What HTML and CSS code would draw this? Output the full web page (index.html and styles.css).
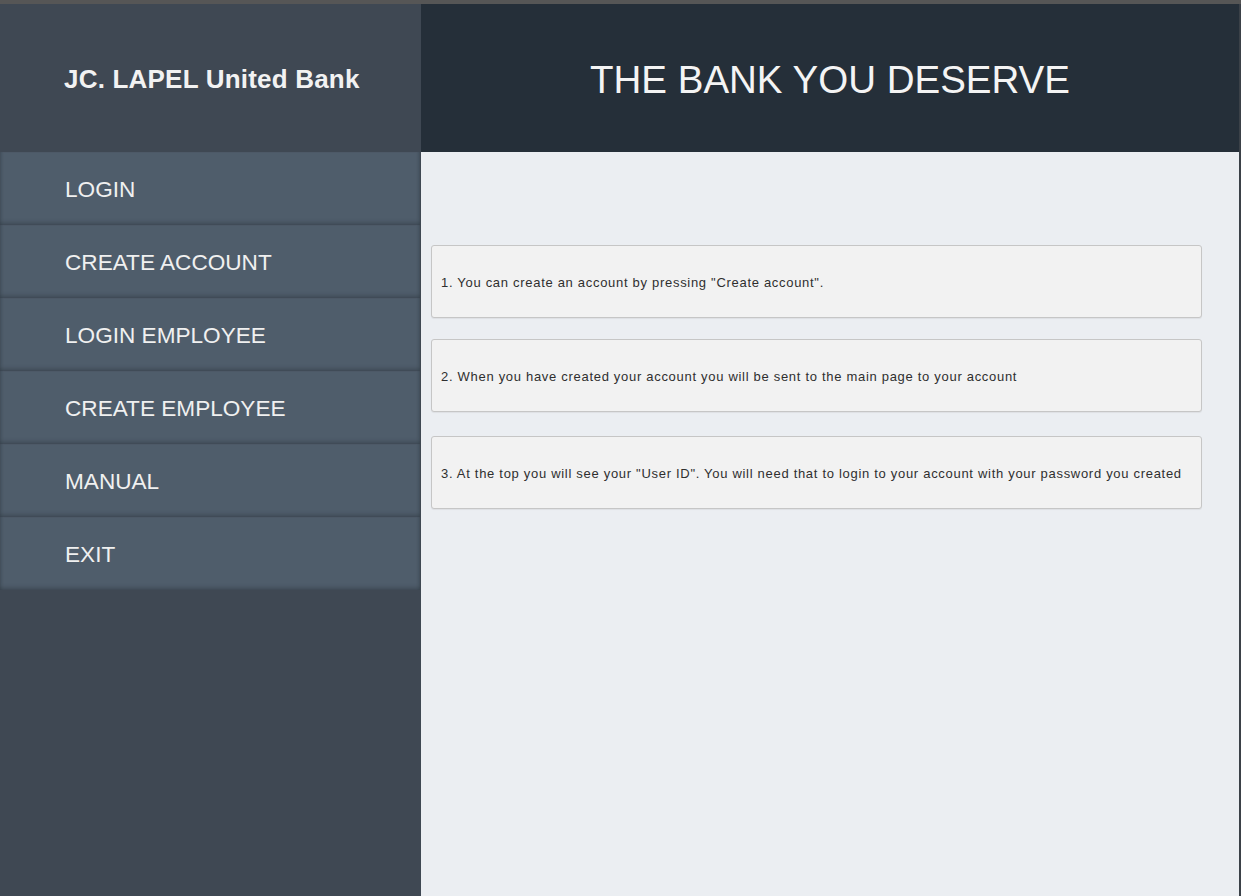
FILE: index.html
```html
<!DOCTYPE html>
<html>
<head>
<meta charset="utf-8">
<link rel="stylesheet" href="styles.css">
</head>
<body>
<div class="window">
  <div class="topbar"></div>
  <div class="app">
    <aside class="sidebar">
      <div class="brand">JC. LAPEL United Bank</div>
      <nav class="menu">
        <div class="item">LOGIN</div>
        <div class="item">CREATE ACCOUNT</div>
        <div class="item">LOGIN EMPLOYEE</div>
        <div class="item">CREATE EMPLOYEE</div>
        <div class="item">MANUAL</div>
        <div class="item">EXIT</div>
      </nav>
    </aside>
    <main class="main">
      <header class="hero">THE BANK YOU DESERVE</header>
      <section class="content">
        <div class="note n1">1. You can create an account by pressing "Create account".</div>
        <div class="note n2">2. When you have created your account you will be sent to the main page to your account</div>
        <div class="note n3">3. At the top you will see your "User ID". You will need that to login to your account with your password you created</div>
      </section>
    </main>
  </div>
</div>
</body>
</html>
```
FILE: styles.css
```css
* { box-sizing: border-box; }
html, body { margin: 0; padding: 0; }
body {
  width: 1241px;
  height: 896px;
  overflow: hidden;
  font-family: "Liberation Sans", Arial, sans-serif;
  background: #3f4853;
}
.window { display: flex; flex-direction: column; height: 896px; }
.topbar { height: 4px; background: #565656; flex: none; }
.app { display: flex; flex: 1; min-height: 0; }
.sidebar {
  width: 421px;
  flex: none;
  background: #3f4853;
  display: flex;
  flex-direction: column;
}
.brand {
  height: 148px;
  display: flex;
  align-items: center;
  padding-left: 64px;
  padding-top: 2px;
  color: #f2f2f2;
  font-size: 26px;
  font-weight: bold;
  letter-spacing: 0.2px;
}
.menu { display: flex; flex-direction: column; width: 420px; }
.item {
  height: 73px;
  display: flex;
  align-items: center;
  padding-left: 65px;
  padding-top: 3px;
  background: #4f5d6b;
  color: #f0f0f0;
  font-size: 22.6px;
  box-shadow: inset 0 -4px 4px -2px rgba(40, 48, 58, 0.45), inset 3px 0 3px -2px rgba(40,48,58,0.35), inset -3px 0 3px -2px rgba(40,48,58,0.35);
}
.main {
  flex: 1;
  display: flex;
  flex-direction: column;
  border-right: 2px solid #3b4148;
}
.hero {
  height: 148px;
  flex: none;
  background: #252f39;
  color: #f4f4f4;
  font-size: 38.5px;
  display: flex;
  align-items: center;
  justify-content: center;
  padding-top: 3px;
}
.content {
  flex: 1;
  background: #ebeef2;
  padding: 93px 37px 0 10px;
  display: flex;
  flex-direction: column;
}
.note {
  height: 73px;
  width: 771px;
  background: #f2f2f2;
  border: 1px solid #c6c6c6;
  border-radius: 3px;
  box-shadow: 0 1px 1px rgba(0,0,0,0.06);
  display: flex;
  align-items: center;
  padding-left: 9px;
  padding-top: 1px;
  font-size: 13px;
  letter-spacing: 0.7px;
  color: #2f2f2f;
}
.n2 { margin-top: 21px; }
.n3 { margin-top: 24px; }
```
